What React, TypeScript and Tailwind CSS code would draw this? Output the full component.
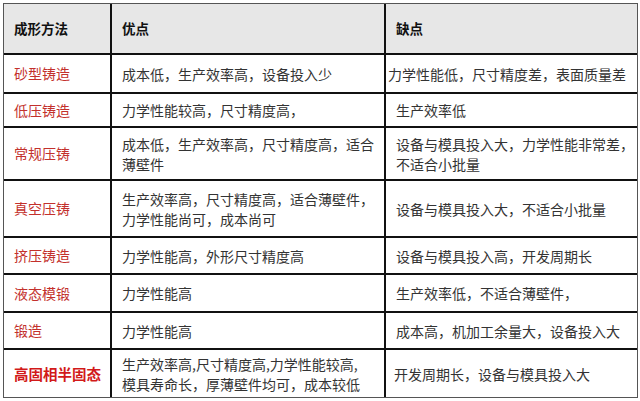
const rows: {
  method: string;
  pros: string[];
  cons: string[];
  h: string;
  consPad?: string;
  strong?: boolean;
}[] = [
  { method: "砂型铸造", pros: ["成本低，生产效率高，设备投入少"], cons: ["力学性能低，尺寸精度差，表面质量差"], h: "h-[39px]", consPad: "pl-[2px]" },
  { method: "低压铸造", pros: ["力学性能较高，尺寸精度高，"], cons: ["生产效率低"], h: "h-[34px]" },
  { method: "常规压铸", pros: ["成本低，生产效率高，尺寸精度高，适合", "薄壁件"], cons: ["设备与模具投入大，力学性能非常差，", "不适合小批量"], h: "h-[53px]" },
  { method: "真空压铸", pros: ["生产效率高，尺寸精度高，适合薄壁件，", "力学性能尚可，成本尚可"], cons: ["设备与模具投入大，不适合小批量"], h: "h-[57px]" },
  { method: "挤压铸造", pros: ["力学性能高，外形尺寸精度高"], cons: ["设备与模具投入高，开发周期长"], h: "h-[37px]" },
  { method: "液态模锻", pros: ["力学性能高"], cons: ["生产效率低，不适合薄壁件，"], h: "h-[38px]" },
  { method: "锻造", pros: ["力学性能高"], cons: ["成本高，机加工余量大，设备投入大"], h: "h-[37px]" },
  { method: "高固相半固态", pros: ["生产效率高,尺寸精度高,力学性能较高,", "模具寿命长，厚薄壁件均可，成本较低"], cons: ["开发周期长，设备与模具投入大"], h: "h-[49px]", consPad: "pl-[8px]", strong: true },
];

function Lines({ lines }: { lines: string[] }) {
  return (
    <div className="leading-[20px]">
      {lines.map((l) => (
        <div key={l} className="whitespace-nowrap">
          {l}
        </div>
      ))}
    </div>
  );
}

export default function App() {
  return (
    <div
      className="w-[640px] h-[401px] bg-white pt-[3px] pl-[3px]"
      style={{ fontFamily: '"Noto Sans CJK SC", "Noto Sans", sans-serif' }}
    >
      <div className="w-[635px] border border-[#555]">
        <div className="grid grid-cols-[106px_274px_253px] h-[49px] bg-[#e7e7e7] text-[13.5px] font-bold text-[#111]">
          <div className="flex items-center pl-[10px]">成形方法</div>
          <div className="flex items-center pl-[10px] border-l-2 border-[#111]">优点</div>
          <div className="flex items-center pl-[10px] border-l-2 border-[#111]">缺点</div>
        </div>
        {rows.map((r) => (
          <div
            key={r.method}
            className={`grid grid-cols-[106px_274px_253px] border-t-2 border-[#111] text-[14px] text-[#333] ${r.h}`}
          >
            <div
              className={
                r.strong
                  ? "flex items-center pl-[10px] text-[14.5px] font-bold text-[#d21a1a]"
                  : "flex items-center pl-[10px] text-[#c3302c]"
              }
            >
              {r.method}
            </div>
            <div className="flex items-center pl-[10px] border-l-2 border-[#111]">
              <Lines lines={r.pros} />
            </div>
            <div className={`flex items-center border-l-2 border-[#111] ${r.consPad ?? "pl-[10px]"}`}>
              <Lines lines={r.cons} />
            </div>
          </div>
        ))}
      </div>
    </div>
  );
}
